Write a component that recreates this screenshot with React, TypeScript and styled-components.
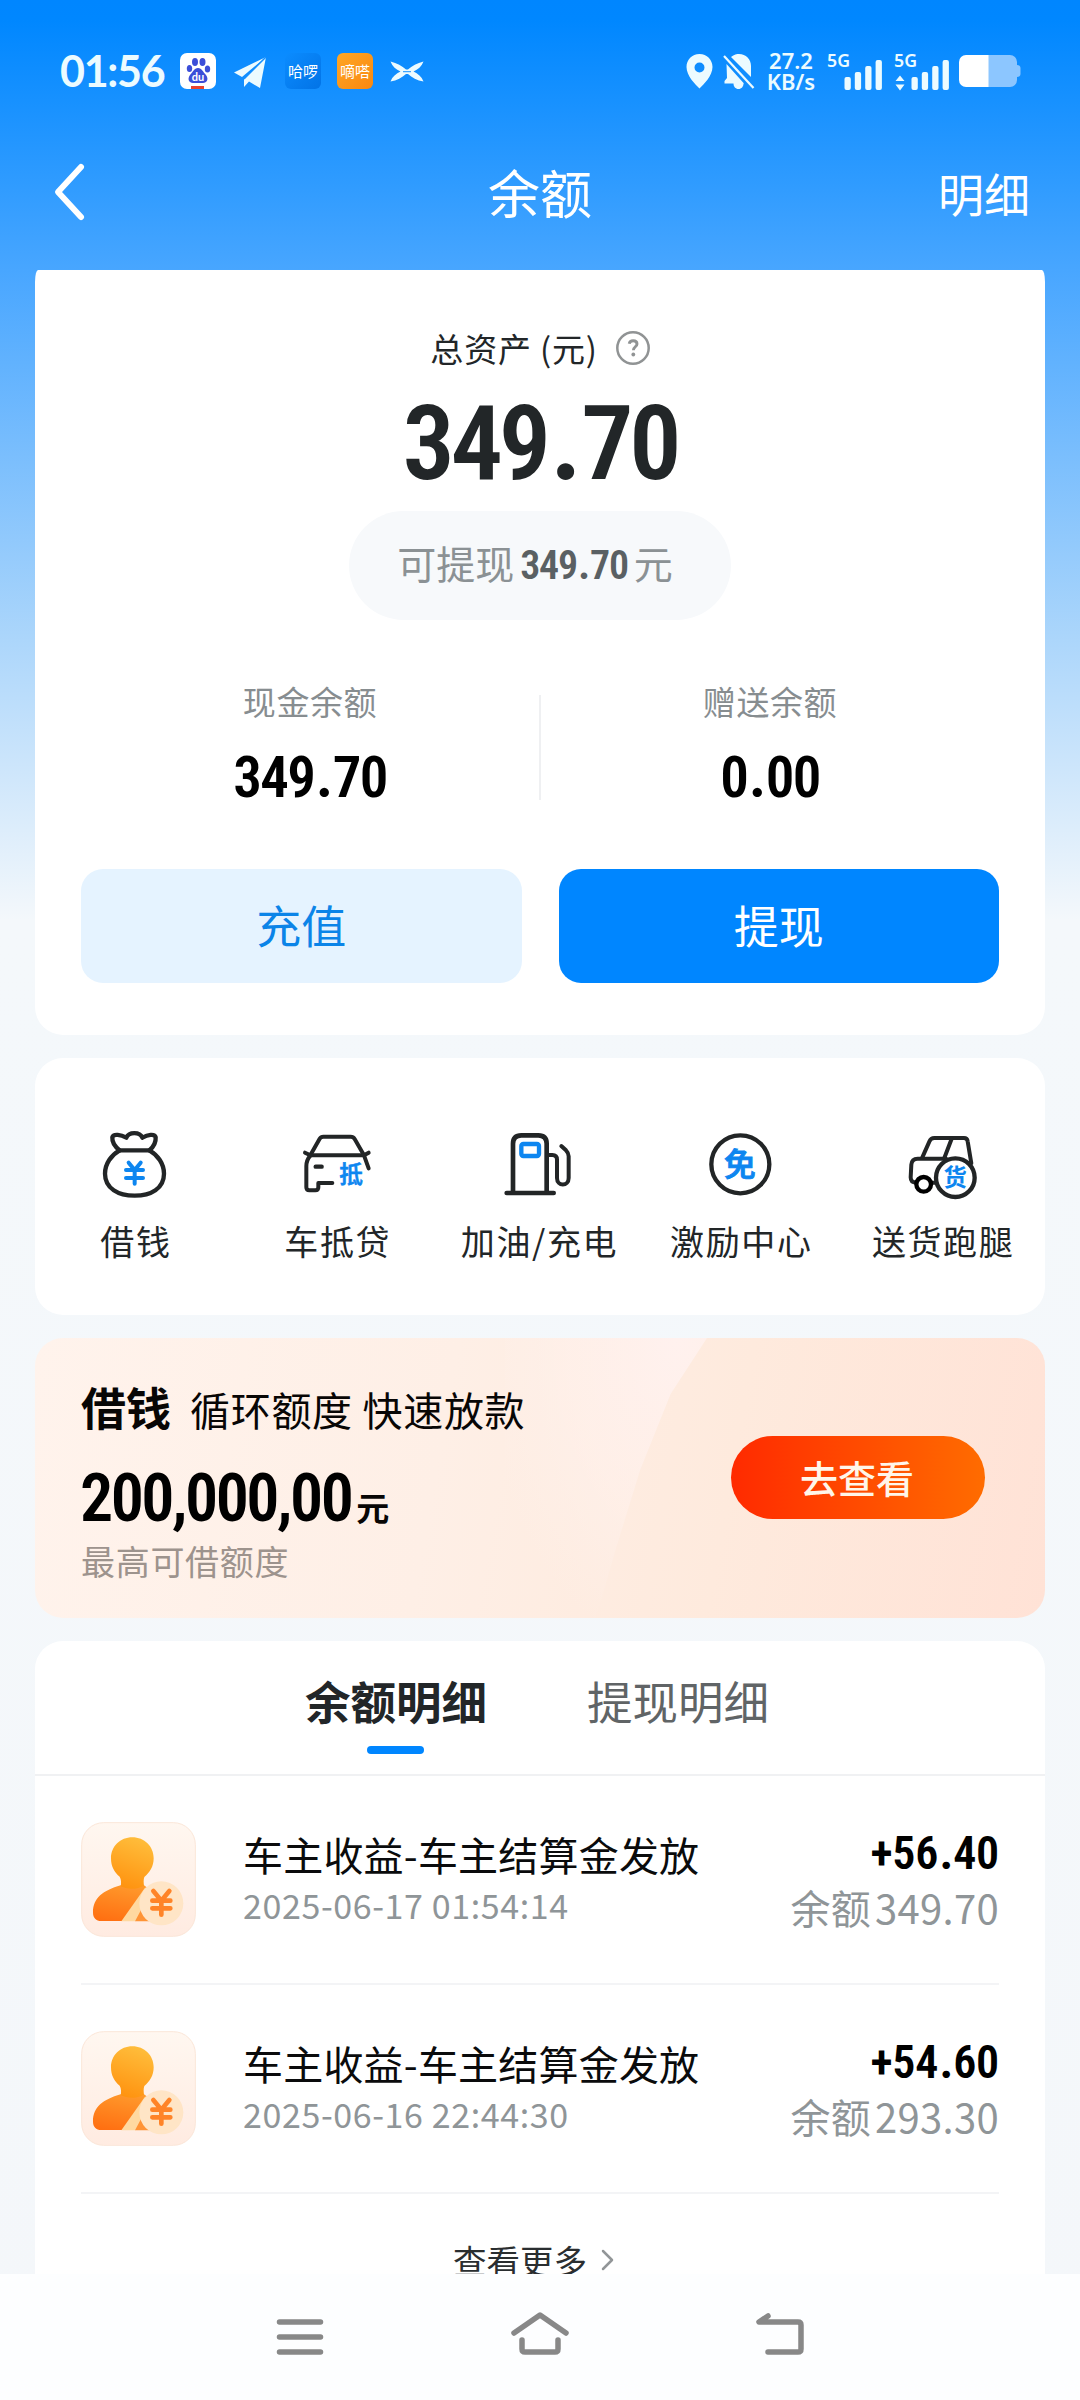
import React from 'react';
import styled, { createGlobalStyle } from 'styled-components';

const cjk = "'Noto Sans CJK SC', 'Noto Sans', sans-serif";
const din = "'Roboto Condensed', 'Noto Sans CJK SC', sans-serif";

const GlobalStyle = createGlobalStyle`
  * { box-sizing: border-box; }
  body { margin: 0; font-family: ${cjk}; color: #222628; }
  svg { display: block; flex: none; overflow: visible; }
  button { border: 0; padding: 0; font-family: inherit; }
`;

const Screen = styled.div`
  width: 1080px;
  height: 2400px;
  display: flex;
  flex-direction: column;
  overflow: hidden;
  background: linear-gradient(#0086ff 0, #0087ff 20px, #48a6ff 270px, #acd6fb 640px, #f4f8fb 920px, #f4f7fa 100%);
`;

const StatusBar = styled.div`
  height: 125px;
  flex: none;
  display: flex;
  justify-content: space-between;
  align-items: flex-start;
  padding: 53px 59px 0 60px;
  color: #ecfbff;
`;

const StatusGroup = styled.div<{ $gap: number }>`
  display: flex;
  align-items: center;
  height: 36px;
  gap: ${(p) => p.$gap}px;
`;

const Clock = styled.span`
  width: 104px;
  font: 700 43px/36px Lato, sans-serif;
  letter-spacing: -1.3px;
  white-space: nowrap;
`;

const Speed = styled.div`
  width: 50px;
  font: 600 22px/21px 'Noto Sans', sans-serif;
  text-align: center;
  white-space: nowrap;
  display: flex;
  flex-direction: column;
  align-items: center;
`;

const TitleBar = styled.header`
  height: 145px;
  flex: none;
  display: grid;
  grid-template-columns: 1fr auto 1fr;
  align-items: center;
  padding: 0 50px 11px 53px;
  color: #fff;
`;

const Title = styled.h1`
  margin: 0 3px 0 0;
  font-size: 52px;
  line-height: 60px;
  font-weight: 400;
`;

const TitleAction = styled.span`
  justify-self: end;
  font-size: 46px;
  line-height: 60px;
  padding-bottom: 1px;
`;

const Content = styled.main`
  flex: 1;
  min-height: 0;
  overflow: hidden;
  padding: 0 35px;
  display: flex;
  flex-direction: column;
`;

const Card = styled.section<{ $gap?: number }>`
  flex: none;
  background: #fff;
  border-radius: 28px;
  margin-top: ${(p) => p.$gap ?? 23}px;
`;

const BalanceCard = styled(Card)`
  border-radius: 3px 3px 28px 28px / 12px 12px 28px 28px;
  padding: 58px 46px 52px 46px;
  display: flex;
  flex-direction: column;
  align-items: center;
`;

const AssetLabel = styled.div`
  display: flex;
  align-items: center;
  gap: 18px;
  height: 40px;
  font-size: 33px;
  line-height: 40px;
  letter-spacing: 0.8px;
`;

const Figure = styled.span<{ $size: number; $line: number; $weight?: number; $color?: string; $track?: number }>`
  font-family: ${din};
  font-size: ${(p) => p.$size}px;
  line-height: ${(p) => p.$line}px;
  font-weight: ${(p) => p.$weight ?? 600};
  color: ${(p) => p.$color ?? '#000'};
  letter-spacing: ${(p) => p.$track ?? -0.03}em;
  white-space: nowrap;
`;

const Point = styled.span`
  font-family: Lato, sans-serif;
  font-weight: 900;
  line-height: 0;
  letter-spacing: 0;
  margin: 0 0.03em 0 0.06em;
`;

const TotalRow = styled.div`
  margin-top: 24px;
  height: 104px;
`;

const Pill = styled.div`
  margin-top: 15px;
  width: 382px;
  height: 109px;
  border-radius: 55px;
  background: #f7f9fb;
  color: #8b9194;
  font-size: 39px;
  display: flex;
  align-items: baseline;
  justify-content: center;
  gap: 6px;
  line-height: 50px;
  padding: 26px 10px 0 0;
`;

const Stats = styled.div`
  align-self: stretch;
  margin-top: 61px;
  height: 127px;
  display: grid;
  grid-template-columns: 1fr 2px 1fr;
`;

const Stat = styled.div`
  display: flex;
  flex-direction: column;
  align-items: center;
  gap: 27px;
`;

const StatLabel = styled.span`
  font-size: 33px;
  line-height: 40px;
  letter-spacing: 0.6px;
  color: #878d90;
`;

const StatDivider = styled.i`
  margin: 14px 0 8px;
  background: #eff0f2;
`;

const Actions = styled.div`
  align-self: stretch;
  margin-top: 61px;
  display: grid;
  grid-template-columns: 1fr 1fr;
  gap: 37px;
`;

const ActionButton = styled.button<{ $primary?: boolean }>`
  height: 114px;
  border-radius: 22px;
  padding-bottom: 3px;
  font-size: 45px;
  background: ${(p) => (p.$primary ? '#0086ff' : '#e5f3ff')};
  color: ${(p) => (p.$primary ? '#fff' : '#0b84e8')};
`;

const ServiceCard = styled(Card)`
  height: 257px;
  padding-top: 70px;
  display: grid;
  grid-template-columns: repeat(5, 201.8px);
`;

const Service = styled.div`
  display: flex;
  flex-direction: column;
  align-items: center;
  gap: 21px;
  font-size: 34px;
  line-height: 40px;
  letter-spacing: 1.6px;
  white-space: nowrap;

  svg { margin-right: 2px; }
`;

const Banner = styled(Card)`
  height: 280px;
  padding: 44px 60px 0 46px;
  display: flex;
  justify-content: space-between;
  position: relative;
  overflow: hidden;
  background: linear-gradient(100deg, #fff3ec 0%, #feefe6 40%, #feeadd 68%, #ffe2d6 100%);
`;

const BannerShine = styled.i`
  position: absolute;
  top: 0;
  left: 470px;
  width: 202px;
  height: 280px;
  clip-path: polygon(0 0, 100% 0, 82% 20%, 67% 47%, 55% 75%, 45% 100%, 0 100%);
  background: radial-gradient(ellipse at 85% 0, #fff1ee 0%, #fff1ec99 45%, #fff1ec00 80%);
`;

const BannerText = styled.div`
  position: relative;
  color: #080605;
`;

const BannerHeading = styled.div`
  display: flex;
  align-items: baseline;
  height: 50px;
  font-size: 40px;
  line-height: 50px;
  letter-spacing: 0.7px;
  white-space: pre;
`;

const Strong = styled.strong`
  font-size: 45px;
  font-weight: 700;
  margin-right: 19px;
  letter-spacing: 0;
`;

const BannerAmount = styled.div`
  display: flex;
  align-items: baseline;
  height: 60px;
  margin: 37px 0 0 -1px;
  line-height: 60px;
  gap: 5px;
`;

const Unit = styled.span`
  font-size: 33px;
  font-weight: 700;
`;

const BannerCaption = styled.div`
  margin-top: 12px;
  font-size: 34px;
  line-height: 40px;
  letter-spacing: 0.7px;
  color: #9d938d;
`;

const BannerButton = styled.button`
  position: relative;
  width: 254px;
  height: 83px;
  margin-top: 54px;
  border-radius: 42px;
  padding: 0 2px 3px 0;
  font-size: 38px;
  font-weight: 500;
  color: #fff6ea;
  background: linear-gradient(90deg, #ff2a00, #ff6c00);
`;

const ListCard = styled(Card)`
  border-radius: 28px 28px 0 0;
  height: 640px;
`;

const Tabs = styled.nav`
  height: 135px;
  padding: 29px 6px 0 0;
  border-bottom: 2px solid #f0f1f3;
  display: flex;
  justify-content: center;
  gap: 100px;
`;

const Tab = styled.div<{ $active?: boolean }>`
  display: flex;
  flex-direction: column;
  align-items: center;
  font-size: 45.5px;
  line-height: 60px;
  font-weight: ${(p) => (p.$active ? 700 : 400)};
  color: ${(p) => (p.$active ? '#222628' : '#606466')};
`;

const TabMark = styled.i`
  width: 57px;
  height: 8px;
  margin-top: 16px;
  border-radius: 4px;
  background: #0086ff;
`;

const Record = styled.article`
  height: 209px;
  margin: 0 46px;
  padding-top: 46px;
  border-bottom: 2px solid #f3f4f6;
  display: flex;
`;

const RecordMain = styled.div`
  flex: 1;
  padding: 8px 0 0 47px;
`;

const RecordTitle = styled.div`
  font-size: 40px;
  line-height: 48px;
  letter-spacing: 0.2px;
  color: #0a0b0c;
  white-space: nowrap;
`;

const RecordDate = styled.div`
  margin-top: 7px;
  font-size: 34px;
  line-height: 40px;
  letter-spacing: 0.6px;
  color: #8f9598;
`;

const RecordSide = styled.div`
  display: flex;
  flex-direction: column;
  align-items: flex-end;
  gap: 7px;
  padding: 7px 0 0 0;
`;

const RecordBalance = styled.div`
  display: flex;
  gap: 4px;
  font-size: 40px;
  line-height: 46px;
  letter-spacing: 0.3px;
  color: #8f9598;
`;

const More = styled.div`
  padding: 46px 12px 0 0;
  display: flex;
  justify-content: center;
  align-items: center;
  gap: 14px;
  font-size: 33.5px;
  line-height: 40px;
  color: #2a2e30;
`;

const NavBar = styled.footer`
  height: 126px;
  flex: none;
  background: #fdfeff;
  display: flex;
  justify-content: center;
  gap: 180px;
  padding-top: 34px;
`;

const Money = ({ value }: { value: string }) => {
  const [whole, cents] = value.split('.');
  return (
    <>
      {whole}
      <Point>.</Point>
      {cents}
    </>
  );
};

const BaiduIcon = () => (
  <svg width="36" height="36" viewBox="0 0 36 36">
    <rect width="36" height="36" rx="7" fill="#fff" />
    <g fill="#3b4ed8">
      <ellipse cx="15" cy="9" rx="3" ry="4" />
      <ellipse cx="22.500" cy="9" rx="3" ry="4" />
      <ellipse cx="9.500" cy="15.500" rx="2.700" ry="3.600" />
      <ellipse cx="27.500" cy="16" rx="2.700" ry="3.600" />
      <path d="M18 15c4 0 5 4 8 7 3 4 1 8-3 8H13c-4 0-6-4-3-8 3-3 4-7 8-7z" />
    </g>
    <rect x="11" y="33" width="13" height="3" fill="#e8432e" />
    <text x="18" y="28" fontSize="11" fontWeight="700" fontFamily="Lato, sans-serif" textAnchor="middle" fill="#fff">du</text>
  </svg>
);

const PlaneIcon = () => (
  <svg width="36" height="36" viewBox="0 0 36 36" fill="#ecfbff">
    <path d="M33 4 1 19.500l8 4.500z" />
    <path d="M33 4 11 26v8l5-5.500 11 6.500z" />
    <path d="M33 4 11 26" stroke="#1590ff" strokeWidth="1.500" />
  </svg>
);

const AppBadge = ({ text, from, to, size }: { text: string; from: string; to: string; size: number }) => (
  <svg width="36" height="36" viewBox="0 0 36 36">
    <defs>
      <linearGradient id={`badge-${from.slice(1)}`} x1="0" y1="0" x2="1" y2="1">
        <stop stopColor={from} />
        <stop offset="1" stopColor={to} />
      </linearGradient>
    </defs>
    <rect width="36" height="36" rx="6" fill={`url(#badge-${from.slice(1)})`} />
    <text x="18" y="23.500" fontSize={size} fontWeight="400" fontFamily={cjk} textAnchor="middle" fill="#fff">{text}</text>
  </svg>
);

const WingIcon = () => (
  <svg width="36" height="36" viewBox="0 0 36 36" fill="#ecfbff">
    <path d="M1.500 8.500C8 10 13 13 17 16.500h2C23 13 28 10 34.500 8.500c-2 5-5.500 8-10 10 4.500 2 8 5 10 10-6.500-1-11.500-4-15.500-7.500h-2C13 24.500 8 27.500 1.500 28.500c2-5 5.500-8 10-10-4.500-2-8-5-10-10z" />
    <path d="M14 18.700h8" stroke="#1590ff" strokeWidth="1" />
  </svg>
);

const PinIcon = () => (
  <svg width="28" height="36" viewBox="0 0 28 36">
    <path fillRule="evenodd" fill="#ecfbff" d="M13.500 1C6 1 .5 6.800.5 14 .5 23 9.500 31.500 13.500 35.500 17.500 31.500 26.500 23 26.500 14 26.500 6.800 21 1 13.500 1zm0 8.500a5 5 0 1 1 0 10 5 5 0 0 1 0-10z" />
  </svg>
);

const BellOffIcon = () => (
  <svg width="34" height="36" viewBox="0 0 34 36">
    <path fill="#ecfbff" d="M8 4c3-2.600 6-3 8-3 7 0 12 5 12 12v11zM3.500 11 21 30.500h-.5c0 3-2 5.500-5 5.500s-5-2.500-5-5.500H1.500V28L4 25z" />
    <path d="M1 3l29.500 32" stroke="#ecfbff" strokeWidth="2.200" />
  </svg>
);

const SignalIcon = ({ arrows }: { arrows?: boolean }) => (
  <svg width="58" height="40" viewBox="0 0 58 40" fill="#ecfbff">
    <text x="2" y="16" fontSize="18.500" fontWeight="600" fontFamily="'Noto Sans', sans-serif" textLength="23" lengthAdjust="spacingAndGlyphs">5G</text>
    <rect x="19.500" y="26" width="6.300" height="13" rx="2" />
    <rect x="29.800" y="21" width="6.300" height="18" rx="2" />
    <rect x="40.200" y="15" width="6.300" height="24" rx="2" />
    <rect x="50.600" y="9" width="6.300" height="30" rx="2" />
    {arrows && <path d="M8 24.500l4.500 5.500h-9zM8 39.500l4.500-6h-9z" />}
  </svg>
);

const BatteryIcon = () => (
  <svg width="62" height="34" viewBox="0 0 62 34">
    <path fill="#8cc6ff" d="M29 1h22a7 7 0 0 1 7 7v3c2 0 3.500 1 3.500 3v6c0 2-1.500 3-3.500 3v3a7 7 0 0 1-7 7H29z" />
    <path fill="#fff" d="M29.500 1v32H7a7 7 0 0 1-7-7V8a7 7 0 0 1 7-7z" />
  </svg>
);

const HelpIcon = () => (
  <svg width="34" height="34" viewBox="0 0 34 34">
    <circle cx="17" cy="17" r="15.700" fill="none" stroke="#909394" strokeWidth="2.500" />
    <path d="M13.200 12.800c.5-2.200 2-3 3.900-3 2.400 0 3.900 1.200 3.900 3.200 0 2.800-3.600 2.800-3.600 6.200" fill="none" stroke="#909394" strokeWidth="2.900" />
    <circle cx="17.300" cy="23.500" r="1.900" fill="#909394" />
  </svg>
);

const ink = { fill: 'none', stroke: '#222526', strokeWidth: 13, strokeLinecap: 'round' as const, strokeLinejoin: 'round' as const };

const MoneyBagIcon = () => (
  <svg width="80" height="72" viewBox="105 84 240 216">
    <g {...ink}>
      <path d="M179 151C164 139 156 125 157 112c3-12 26-8 42 1 8-18 40-18 48 0 16-9 37-13 40-1 1 13-6 28-19 39" />
      <path d="M179 151h89c25 14 44 40 44 70 0 44-39 66-88 66s-89-22-89-66c0-30 19-56 44-70z" />
    </g>
    <path d="M206 188l18 22 18-22M198 210h51M198 234h51M224 210v41" fill="none" stroke="#0d86f0" strokeWidth="12" strokeLinecap="round" />
  </svg>
);

const CarLoanIcon = () => (
  <svg width="80" height="72" viewBox="708 84 240 216">
    <g {...ink} strokeWidth={12}>
      <path d="M732 158l16 8 28-50c3-5 6-6 11-6h82c6 0 9 2 12 7l28 49 14-8" />
      <path d="M748 166h161l14 39" />
      <path d="M748 167c-9 10-12 19-12 32v63c0 6 3 9 9 9h18c6 0 9-3 9-9v-13h42" />
      <path d="M764 200h18" strokeWidth="13" />
    </g>
    <text x="871" y="250" fontSize="71" fontWeight="500" fontFamily={cjk} textAnchor="middle" fill="#0d86f0" stroke="#0d86f0" strokeWidth="2">抵</text>
  </svg>
);

const FuelIcon = () => (
  <svg width="80" height="72" viewBox="1314 84 240 216">
    <g {...ink} strokeWidth={14}>
      <path d="M1359 278V131c0-17 8-25 25-25h51c17 0 25 8 25 25v147" />
      <path d="M1340 279h141" />
      <path d="M1462 165h15c9 0 14 5 14 14v55c0 26 35 26 35 0v-65c0-8-3-13-8-18l-14-13" strokeWidth="12" />
    </g>
    <rect x="1384" y="132" width="53" height="36" rx="6" fill="none" stroke="#0d86f0" strokeWidth="13" />
  </svg>
);

const FreeIcon = () => (
  <svg width="80" height="72" viewBox="480 84 240 216">
    <circle cx="601" cy="193" r="87" {...ink} />
    <text x="600" y="229" fontSize="95" fontWeight="500" fontFamily={cjk} textAnchor="middle" fill="#0d86f0" stroke="#0d86f0" strokeWidth="3">免</text>
  </svg>
);

const CargoIcon = () => (
  <svg width="80" height="72" viewBox="1086 84 240 216">
    <g {...ink} strokeWidth={12}>
      <path d="M1218 176h-85c-12 0-18 6-19 18l-2 38c0 11 5 16 16 16h60" />
      <path d="M1147 172l21-47c3-8 7-11 15-11h89c7 0 10 3 11 10l11 66" />
      <path d="M1235 116l-22 58" />
      <circle cx="1151" cy="253" r="22" fill="#fff" stroke="#000" strokeWidth="13" />
      <circle cx="1246" cy="233" r="58" fill="#fff" strokeWidth="13" />
    </g>
    <text x="1246" y="258" fontSize="70" fontWeight="700" fontFamily={cjk} textAnchor="middle" fill="#0d86f0">货</text>
  </svg>
);

const AvatarIcon = ({ id }: { id: string }) => (
  <svg width="115" height="115" viewBox="33 36 345 345">
    <defs>
      <linearGradient id={`${id}-bg`} x1="0" y1="0" x2="0" y2="1">
        <stop stopColor="#fff7f0" />
        <stop offset="1" stopColor="#ffebe1" />
      </linearGradient>
      <linearGradient id={`${id}-head`} x1="0.700" y1="0" x2="0.400" y2="1">
        <stop stopColor="#ffbe3c" />
        <stop offset="1" stopColor="#ff9310" />
      </linearGradient>
      <linearGradient id={`${id}-body`} x1="0.600" y1="0" x2="0.300" y2="1">
        <stop stopColor="#ff9a2c" />
        <stop offset="1" stopColor="#ff7012" />
      </linearGradient>
    </defs>
    <rect x="35" y="38" width="341" height="341" rx="66" fill={`url(#${id}-bg)`} stroke="#fbe6d8" strokeWidth="3" />
    <path d="M152 226c20-8 50-8 70 0l14 10-58 97H94c-16 0-25-10-25-25 0-45 30-66 83-82z" fill={`url(#${id}-body)`} />
    <path d="M187 82c36 0 64 27 64 63 0 25-12 43-28 56-3 8-2 17-1 26-20 12-50 12-70 2 2-10 2-20-3-29-16-13-26-31-26-55 0-36 28-63 64-63z" fill={`url(#${id}-head)`} />
    <path d="M226 232l-72 102h42l40-60z" fill="#ffd9a0" />
    <path d="M213 300l-18 34h44z" fill="#ff9436" />
    <circle cx="274" cy="280" r="66" fill="#ffe5c6" />
    <path d="M250 243l24 29 24-29M247 272h54M247 295h54M274 272v42" fill="none" stroke="#ff8428" strokeWidth="14" strokeLinecap="round" />
  </svg>
);

const services = [
  { name: '借钱', icon: <MoneyBagIcon /> },
  { name: '车抵贷', icon: <CarLoanIcon /> },
  { name: '加油/充电', icon: <FuelIcon /> },
  { name: '激励中心', icon: <FreeIcon /> },
  { name: '送货跑腿', icon: <CargoIcon /> },
];

const records = [
  { date: '2025-06-17 01:54:14', amount: '+56.40', balance: '349.70' },
  { date: '2025-06-16 22:44:30', amount: '+54.60', balance: '293.30' },
];

export default function App() {
  return (
    <Screen>
      <GlobalStyle />
      <StatusBar>
        <StatusGroup $gap={16.3}>
          <Clock>01:56</Clock>
          <BaiduIcon />
          <PlaneIcon />
          <AppBadge text="哈啰" from="#0b8cff" to="#0273e6" size={15} />
          <AppBadge text="嘀嗒" from="#ffa726" to="#f9870f" size={15} />
          <WingIcon />
        </StatusGroup>
        <StatusGroup $gap={9}>
          <PinIcon />
          <BellOffIcon />
          <Speed>
            <span>27.2</span>
            <span>KB/s</span>
          </Speed>
          <SignalIcon />
          <SignalIcon arrows />
          <BatteryIcon />
        </StatusGroup>
      </StatusBar>
      <TitleBar>
        <svg width="32" height="58" viewBox="0 0 32 58" fill="none" stroke="#fff" strokeWidth="6" strokeLinecap="round" strokeLinejoin="round">
          <path d="M28 4 5 29l23 25" />
        </svg>
        <Title>余额</Title>
        <TitleAction>明细</TitleAction>
      </TitleBar>
      <Content>
        <BalanceCard $gap={0}>
          <AssetLabel>
            <span>总资产 (元)</span>
            <HelpIcon />
          </AssetLabel>
          <TotalRow>
            <Figure $size={104} $line={104} $track={-0.04} $color="#222628"><Money value="349.70" /></Figure>
          </TotalRow>
          <Pill>
            <span>可提现</span>
            <Figure $size={40} $line={50} $color="#5a6063"><Money value="349.70" /></Figure>
            <span>元</span>
          </Pill>
          <Stats>
            <Stat>
              <StatLabel>现金余额</StatLabel>
              <Figure $size={57} $line={60}><Money value="349.70" /></Figure>
            </Stat>
            <StatDivider />
            <Stat>
              <StatLabel>赠送余额</StatLabel>
              <Figure $size={57} $line={60}><Money value="0.00" /></Figure>
            </Stat>
          </Stats>
          <Actions>
            <ActionButton>充值</ActionButton>
            <ActionButton $primary>提现</ActionButton>
          </Actions>
        </BalanceCard>
        <ServiceCard>
          {services.map((s) => (
            <Service key={s.name}>
              {s.icon}
              <span>{s.name}</span>
            </Service>
          ))}
        </ServiceCard>
        <Banner>
          <BannerShine />
          <BannerText>
            <BannerHeading>
              <Strong>借钱</Strong>循环额度 快速放款
            </BannerHeading>
            <BannerAmount>
              <Figure $size={66} $line={60} $track={-0.038}>200,000,00</Figure>
              <Unit>元</Unit>
            </BannerAmount>
            <BannerCaption>最高可借额度</BannerCaption>
          </BannerText>
          <BannerButton>去查看</BannerButton>
        </Banner>
        <ListCard>
          <Tabs>
            <Tab $active>
              余额明细
              <TabMark />
            </Tab>
            <Tab>提现明细</Tab>
          </Tabs>
          {records.map((r, i) => (
            <Record key={r.date}>
              <AvatarIcon id={`avatar-${i}`} />
              <RecordMain>
                <RecordTitle>车主收益-车主结算金发放</RecordTitle>
                <RecordDate>{r.date}</RecordDate>
              </RecordMain>
              <RecordSide>
                <Figure $size={46} $line={48} $track={-0.005}><Money value={r.amount} /></Figure>
                <RecordBalance>
                  <span>余额</span>
                  <span>{r.balance}</span>
                </RecordBalance>
              </RecordSide>
            </Record>
          ))}
          <More>
            查看更多
            <svg width="14" height="24" viewBox="0 0 14 24" fill="none" stroke="#929698" strokeWidth="2.500" strokeLinecap="round" strokeLinejoin="round">
              <path d="M2 3l9 9-9 9" />
            </svg>
          </More>
        </ListCard>
      </Content>
      <NavBar>
        <svg width="60" height="56" viewBox="270 2308 60 56" stroke="#888" strokeWidth="5.500" strokeLinecap="round">
          <path d="M279.500 2322h41M279.500 2337h41M279.500 2352h41" />
        </svg>
        <svg width="60" height="56" viewBox="510 2308 60 56" fill="none" stroke="#888" strokeWidth="5.500" strokeLinecap="round" strokeLinejoin="round">
          <path d="M514 2333l26-18 26 18" />
          <path d="M522 2340v9q0 3 3 3h30q3 0 3-3v-9" />
        </svg>
        <svg width="60" height="56" viewBox="750 2308 60 56" fill="none" stroke="#888" strokeWidth="5.500" strokeLinecap="round" strokeLinejoin="round">
          <path d="M768 2316l-9 6h39q3 0 3 3v24q0 3-3 3h-30" />
        </svg>
      </NavBar>
    </Screen>
  );
}
